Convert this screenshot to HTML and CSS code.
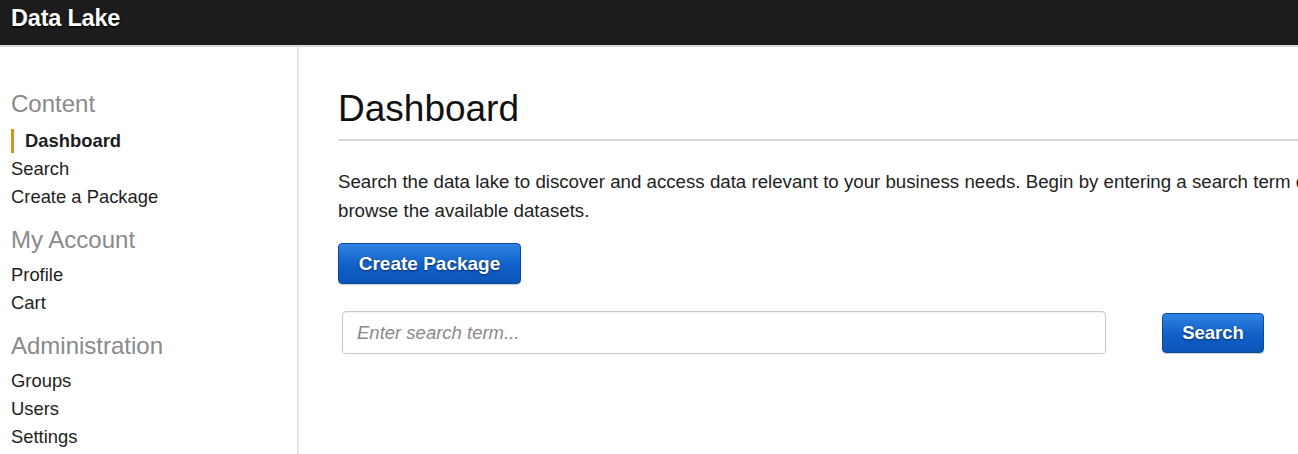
FILE: index.html
```html
<!DOCTYPE html>
<html>
<head>
<meta charset="utf-8">
<title>Data Lake</title>
<link rel="stylesheet" href="styles.css">
</head>
<body>
<header class="topbar"><span class="brand">Data Lake</span></header>
<div class="layout">
  <nav class="sidebar">
    <h3 class="nav-title">Content</h3>
    <a class="nav-link active">Dashboard</a>
    <a class="nav-link">Search</a>
    <a class="nav-link">Create a Package</a>
    <h3 class="nav-title">My Account</h3>
    <a class="nav-link">Profile</a>
    <a class="nav-link">Cart</a>
    <h3 class="nav-title">Administration</h3>
    <a class="nav-link">Groups</a>
    <a class="nav-link">Users</a>
    <a class="nav-link">Settings</a>
  </nav>
  <main class="main">
    <h1 class="page-title">Dashboard</h1>
    <p class="intro">Search the data lake to discover and access data relevant to your business needs. Begin by entering a search term or browse the available datasets.</p>
    <button class="btn">Create Package</button>
    <div class="search-row">
      <input class="search-input" type="text" placeholder="Enter search term...">
      <button class="btn btn-search">Search</button>
    </div>
  </main>
</div>
</body>
</html>
```
FILE: styles.css
```css
html, body {
  margin: 0;
  padding: 0;
  background: #fff;
  overflow: hidden;
  font-family: "Liberation Sans", Arial, sans-serif;
  color: #222;
}
.topbar {
  height: 45px;
  background: #1c1c1c;
  border-bottom: 2px solid #d8d8d8;
  display: flex;
  align-items: center;
  padding-left: 11px;
}
.brand {
  color: #fff;
  font-size: 23.5px;
  font-weight: bold;
  letter-spacing: -0.2px;
  text-shadow: 0 1px 2px #000;
  margin-top: -9px;
}
.layout {
  display: flex;
  height: 420px;
}
.sidebar {
  width: 299px;
  flex: none;
  border-right: 2px solid #e4e4e4;
  padding: 43px 0 0 11px;
  box-sizing: border-box;
  display: flex;
  flex-direction: column;
}
.nav-title {
  font-size: 24px;
  font-weight: normal;
  color: #8a8a8a;
  margin: 0 0 7px 0;
  line-height: 28px;
}
.nav-title:first-child { margin-bottom: 9px; }
.nav-link {
  font-size: 18.4px;
  line-height: 28px;
  color: #1e1e1e;
}
.nav-link + .nav-title { margin-top: 15px; }
.nav-link.active {
  font-weight: bold;
  border-left: 3px solid #d9902a;
  padding-left: 11px;
  line-height: 24px;
  margin-top: 2px;
  margin-bottom: 2px;
}
.main {
  padding: 0 0 0 39px;
  width: 1000px;
  flex: none;
}
.page-title {
  font-size: 37px;
  font-weight: normal;
  color: #111;
  margin: 42px 0 0 0;
  padding-bottom: 10px;
  border-bottom: 2px solid #d6d6d6;
  line-height: 40px;
  width: 1100px;
}
.intro {
  font-size: 18.7px;
  line-height: 29px;
  margin: 26px 0 0 0;
  width: 1020px;
  color: #222;
}
.btn {
  display: block;
  font-family: "Liberation Sans", Arial, sans-serif;
  font-size: 19px;
  font-weight: bold;
  color: #fff;
  text-shadow: 0 1px 2px #0a2a60;
  background: linear-gradient(#2f84e2, #1060c8 55%, #0b55b8);
  border: 1px solid #0a4a9e;
  border-radius: 4px;
  height: 41px;
  width: 183px;
  padding: 0;
  margin-top: 18px;
  box-shadow: 0 1px 1px rgba(0,0,0,0.2);
}
.search-row {
  display: flex;
  align-items: center;
  margin-top: 27px;
  padding-left: 4px;
}
.search-input {
  width: 764px;
  height: 43px;
  box-sizing: border-box;
  border: 1px solid #c9c9c9;
  border-radius: 4px;
  padding: 0 14px;
  font-family: "Liberation Sans", Arial, sans-serif;
  font-size: 18.5px;
  box-shadow: inset 0 1px 2px rgba(0,0,0,0.06);
}
.search-input::placeholder {
  color: #8a8a8a;
  font-style: italic;
}
.btn-search {
  margin: 0 0 0 56px;
  height: 40px;
  width: 102px;
  font-size: 18.5px;
}
```
